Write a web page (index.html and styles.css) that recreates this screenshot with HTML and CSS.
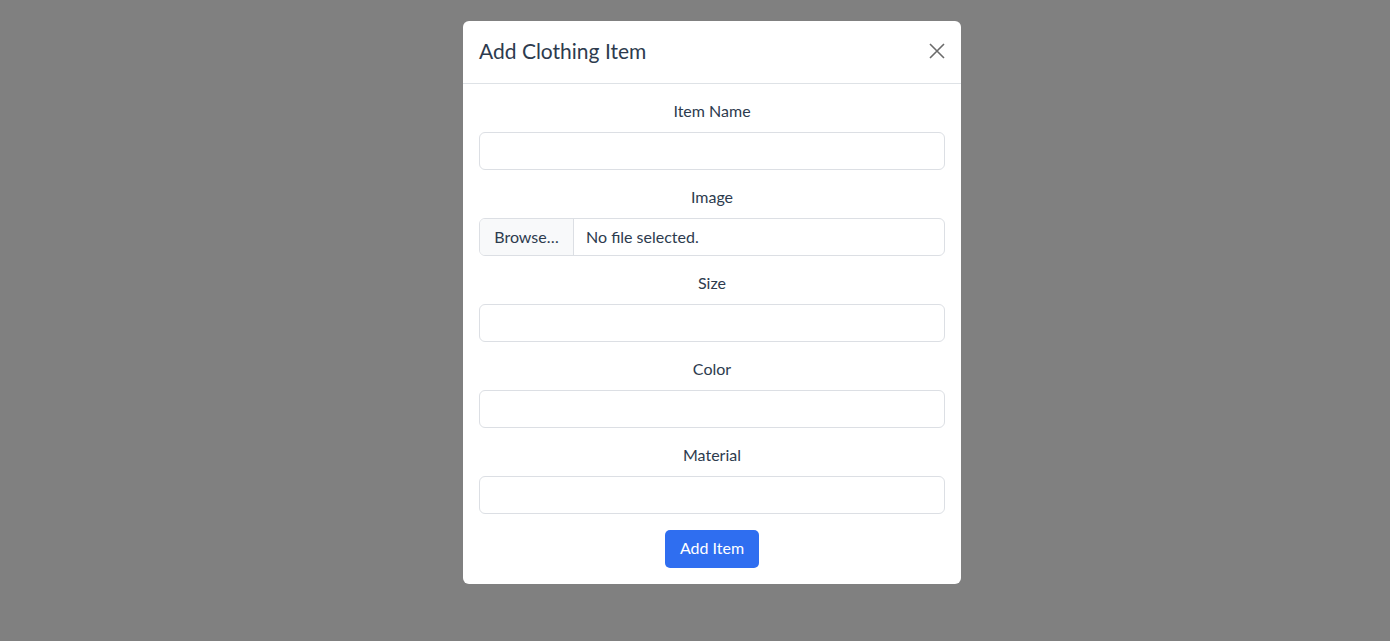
FILE: index.html
```html
<!DOCTYPE html>
<html lang="en">
<head>
<meta charset="utf-8">
<title>Add Clothing Item</title>
<link rel="stylesheet" href="styles.css">
</head>
<body>
<div class="backdrop">
  <div class="modal">
    <div class="modal-header">
      <h5 class="modal-title">Add Clothing Item</h5>
      <button class="close" type="button" aria-label="Close">
        <svg width="16" height="16" viewBox="0 0 16 16"><path d="M1 1L15 15M15 1L1 15" stroke="#6b6b6b" stroke-width="1.6" fill="none"/></svg>
      </button>
    </div>
    <form class="modal-body">
      <div class="group">
        <label class="label">Item Name</label>
        <input class="control" type="text">
      </div>
      <div class="group">
        <label class="label">Image</label>
        <div class="file">
          <span class="file-btn">Browse…</span>
          <span class="file-name">No file selected.</span>
        </div>
      </div>
      <div class="group">
        <label class="label">Size</label>
        <input class="control" type="text">
      </div>
      <div class="group">
        <label class="label">Color</label>
        <input class="control" type="text">
      </div>
      <div class="group">
        <label class="label">Material</label>
        <input class="control" type="text">
      </div>
      <div class="actions">
        <button class="btn" type="button">Add Item</button>
      </div>
    </form>
  </div>
</div>
</body>
</html>
```

FILE: styles.css
```css
* { box-sizing: border-box; }
html, body { margin: 0; padding: 0; }
body {
  font-family: Lato, "Noto Sans", sans-serif;
  color: #2d3b4e;
  background: #808080;
  width: 1390px;
  height: 641px;
  overflow: hidden;
}
.backdrop {
  display: flex;
  justify-content: center;
  align-items: flex-start;
  padding-top: 21px;
  padding-left: 34px;
  height: 641px;
}
.modal {
  width: 498px;
  background: #fff;
  border-radius: 6px;
  display: flex;
  flex-direction: column;
}
.modal-header {
  height: 63px;
  border-bottom: 1px solid #dee2e6;
  display: flex;
  align-items: center;
  justify-content: space-between;
  padding: 0 16px 2px 16px;
}
.modal-title {
  margin: 0 0 2px 0;
  font-size: 21px;
  font-weight: 400;
  color: #2d3b4e;
}
.close {
  border: 0;
  background: transparent;
  padding: 0;
  width: 16px;
  height: 16px;
  display: flex;
}
.modal-body {
  padding: 16px;
  margin: 0;
}
.group {
  display: flex;
  flex-direction: column;
  margin-bottom: 16px;
}
.label {
  text-align: center;
  font-size: 16px;
  line-height: 22px;
  padding-bottom: 2px;
  margin-bottom: 8px;
  color: #2d3b4e;
}
.control {
  height: 38px;
  border: 1px solid #dcdfe4;
  border-radius: 6px;
  font: inherit;
  padding: 6px 12px;
  background: #fff;
}
.file {
  height: 38px;
  border: 1px solid #dcdfe4;
  border-radius: 6px;
  display: flex;
  overflow: hidden;
  font-size: 16px;
}
.file-btn {
  width: 94px;
  background: #f8f9fa;
  border-right: 1px solid #dcdfe4;
  display: flex;
  align-items: center;
  justify-content: center;
  padding-bottom: 2px;
  color: #2d3b4e;
}
.file-name {
  display: flex;
  align-items: center;
  padding-left: 12px;
  padding-bottom: 2px;
  color: #2d3b4e;
}
.actions {
  display: flex;
  justify-content: center;
}
.btn {
  height: 38px;
  width: 94px;
  border: 0;
  border-radius: 5px;
  background: #2f6ef0;
  color: #fff;
  font: inherit;
  font-size: 16px;
  padding: 0 0 3px 0;
}
```
